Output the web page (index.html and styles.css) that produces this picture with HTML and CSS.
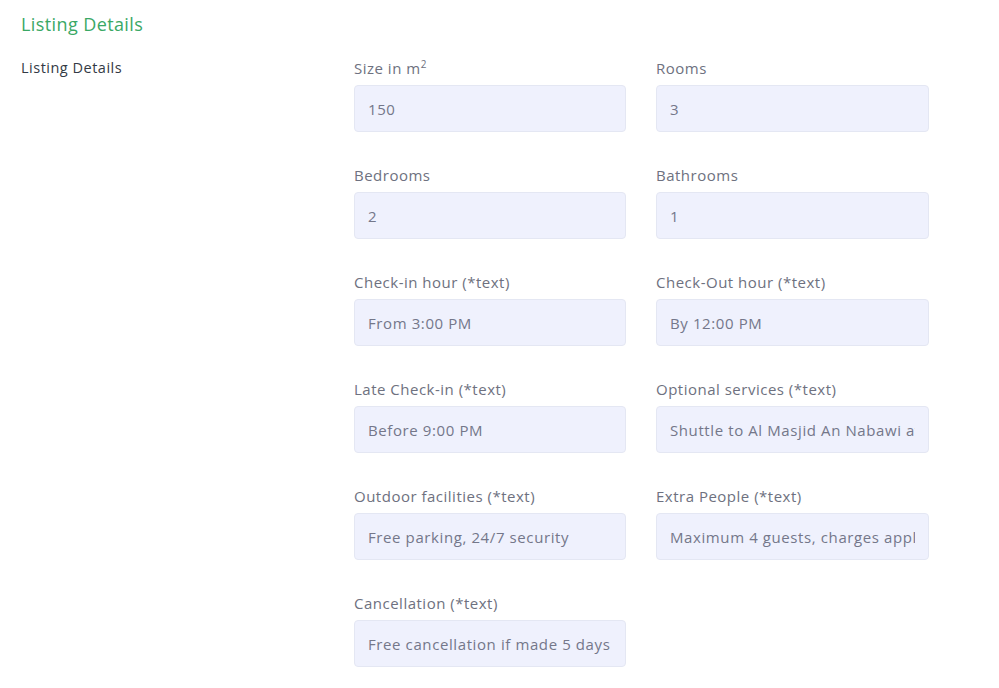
FILE: index.html
```html
<!DOCTYPE html>
<html lang="en">
<head>
    <meta charset="UTF-8">
    <meta name="viewport" content="width=device-width, initial-scale=1.0">
    <title>Listing Details</title>
    <link rel="stylesheet" href="styles.css">
</head>
<body>
    <div class="page">
        <h2 class="section-title">Listing Details</h2>

        <div class="section">
            <div class="section-label">Listing Details</div>

            <div class="fields">
                <div class="field">
                    <label>Size in m<sup>2</sup></label>
                    <input type="text" value="150" readonly>
                </div>
                <div class="field">
                    <label>Rooms</label>
                    <input type="text" value="3" readonly>
                </div>

                <div class="field">
                    <label>Bedrooms</label>
                    <input type="text" value="2" readonly>
                </div>
                <div class="field">
                    <label>Bathrooms</label>
                    <input type="text" value="1" readonly>
                </div>

                <div class="field">
                    <label>Check-in hour (*text)</label>
                    <input type="text" value="From 3:00 PM" readonly>
                </div>
                <div class="field">
                    <label>Check-Out hour (*text)</label>
                    <input type="text" value="By 12:00 PM" readonly>
                </div>

                <div class="field">
                    <label>Late Check-in (*text)</label>
                    <input type="text" value="Before 9:00 PM" readonly>
                </div>
                <div class="field">
                    <label>Optional services (*text)</label>
                    <input type="text" value="Shuttle to Al Masjid An Nabawi available" readonly>
                </div>

                <div class="field">
                    <label>Outdoor facilities (*text)</label>
                    <input type="text" value="Free parking, 24/7 security" readonly>
                </div>
                <div class="field">
                    <label>Extra People (*text)</label>
                    <input type="text" value="Maximum 4 guests, charges apply" readonly>
                </div>

                <div class="field">
                    <label>Cancellation (*text)</label>
                    <input type="text" value="Free cancellation if made 5 days before" readonly>
                </div>
            </div>
        </div>
    </div>
</body>
</html>
```

FILE: styles.css
```css
body {
    margin: 0;
    background-color: #fff;
    font-family: "Open Sans", Arial, sans-serif;
}
.page {
    padding: 12px 21px 0 21px;
}
.section-title {
    margin: 0 0 22px 0;
    font-size: 18px;
    font-weight: 400;
    letter-spacing: 0.4px;
    color: #3aa865;
    line-height: 24px;
}
.section {
    display: flex;
    align-items: flex-start;
}
.section-label {
    width: 333px;
    font-size: 14.5px;
    letter-spacing: 0.5px;
    color: #333a45;
    line-height: 20px;
}
.fields {
    display: grid;
    grid-template-columns: 272px 273px;
    column-gap: 30px;
    row-gap: 33px;
}
.field label {
    display: block;
    font-size: 15px;
    letter-spacing: 0.5px;
    color: #6e7180;
    line-height: 20px;
    margin-bottom: 7px;
}
.field label sup {
    font-size: 10px;
    line-height: 0;
}
.field input {
    display: block;
    box-sizing: border-box;
    width: 100%;
    height: 47px;
    padding: 0 13px;
    border: 1px solid #e4e7f3;
    border-radius: 4px;
    background-color: #eff1fd;
    font-family: inherit;
    font-size: 15px;
    letter-spacing: 0.6px;
    color: #74778a;
    outline: none;
}
```
